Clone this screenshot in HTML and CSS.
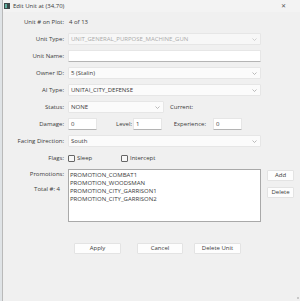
FILE: index.html
```html
<!DOCTYPE html>
<html lang="en">
<head>
  <meta charset="UTF-8">
  <meta name="viewport" content="width=device-width, initial-scale=1.0">
  <title>Edit Unit</title>
  <link rel="stylesheet" href="styles.css">
</head>
<body>
  <div class="window">
    <div class="titlebar">
      <svg class="app-icon" width="6" height="6" viewBox="0 0 6 6">
        <rect x="0" y="0" width="6" height="6" fill="#3d4a4a"/>
        <rect x="1" y="1" width="2" height="4" fill="#5fb0a0"/>
      </svg>
      <span class="title">Edit Unit at (34,70)</span>
      <span class="close">&#x2715;</span>
    </div>

    <div class="form">
      <div class="lbl">Unit # on Plot:</div>
      <div class="value">4 of 13</div>
      <div></div>

      <div class="lbl">Unit Type:</div>
      <div class="combo disabled"><span>UNIT_GENERAL_PURPOSE_MACHINE_GUN</span><svg class="chev" width="5" height="3" viewBox="0 0 5 3"><polyline points="0.5,0.5 2.5,2.5 4.5,0.5" fill="none" stroke="#c4c4c4" stroke-width="0.8"/></svg></div>
      <div></div>

      <div class="lbl">Unit Name:</div>
      <div class="textbox"></div>
      <div></div>

      <div class="lbl">Owner ID:</div>
      <div class="combo"><span>5 (Stalin)</span><svg class="chev" width="5" height="3" viewBox="0 0 5 3"><polyline points="0.5,0.5 2.5,2.5 4.5,0.5" fill="none" stroke="#aaa" stroke-width="0.8"/></svg></div>
      <div></div>

      <div class="lbl">AI Type:</div>
      <div class="combo"><span>UNITAI_CITY_DEFENSE</span><svg class="chev" width="5" height="3" viewBox="0 0 5 3"><polyline points="0.5,0.5 2.5,2.5 4.5,0.5" fill="none" stroke="#aaa" stroke-width="0.8"/></svg></div>
      <div></div>

      <div class="lbl">Status:</div>
      <div class="inline">
        <div class="combo status"><span>NONE</span><svg class="chev" width="5" height="3" viewBox="0 0 5 3"><polyline points="0.5,0.5 2.5,2.5 4.5,0.5" fill="none" stroke="#aaa" stroke-width="0.8"/></svg></div>
        <span class="current">Current:</span>
      </div>
      <div></div>

      <div class="lbl">Damage:</div>
      <div class="inline">
        <div class="textbox small">0</div>
        <span class="lbl lvl">Level:</span>
        <div class="textbox small">1</div>
        <span class="lbl exp">Experience:</span>
        <div class="textbox small">0</div>
      </div>
      <div></div>

      <div class="lbl">Facing Direction:</div>
      <div class="combo"><span>South</span><svg class="chev" width="5" height="3" viewBox="0 0 5 3"><polyline points="0.5,0.5 2.5,2.5 4.5,0.5" fill="none" stroke="#aaa" stroke-width="0.8"/></svg></div>
      <div></div>

      <div class="lbl">Flags:</div>
      <div class="inline">
        <span class="check"></span><span class="check-text sleep">Sleep</span>
        <span class="check"></span><span class="check-text">Intercept</span>
      </div>
      <div></div>

      <div class="lbl-stack">
        <span>Promotions:</span>
        <span class="total">Total #: 4</span>
      </div>
      <div class="listbox">
        <div>PROMOTION_COMBAT1</div>
        <div>PROMOTION_WOODSMAN</div>
        <div>PROMOTION_CITY_GARRISON1</div>
        <div>PROMOTION_CITY_GARRISON2</div>
      </div>
      <div class="side-buttons">
        <button class="btn side">Add</button>
        <button class="btn side">Delete</button>
      </div>
    </div>

    <div class="actions">
      <button class="btn apply">Apply</button>
      <button class="btn cancel">Cancel</button>
      <button class="btn delete-unit">Delete Unit</button>
    </div>
    <div class="grip"></div>
  </div>
</body>
</html>
```

FILE: styles.css
```css
html, body {
  margin: 0;
  height: 100%;
}
body {
  background: #dfe3e6;
  font-family: "Open Sans", "Noto Sans", sans-serif;
  font-size: 6px;
  color: #3a3a3a;
  overflow: hidden;
}
.window {
  margin-left: 2px;
  height: 301px;
  background: #f0f0f0;
  border-left: 1px solid #b9b9b9;
  position: relative;
}
.titlebar {
  height: 12px;
  display: flex;
  align-items: center;
  background: #f3f3f3;
}
.app-icon {
  margin-left: 1px;
  margin-right: 3px;
}
.close {
  margin-left: auto;
  margin-right: 14px;
  color: #555;
}
.form {
  display: grid;
  grid-template-columns: 61px 193px 31px;
  grid-template-rows: repeat(9, 12px) 53px;
  column-gap: 4px;
  row-gap: 5px;
  padding-top: 4px;
}
.lbl {
  text-align: right;
  line-height: 12px;
  white-space: nowrap;
}
.value {
  line-height: 12px;
  padding-left: 1px;
}
.combo, .textbox {
  box-sizing: border-box;
  height: 12px;
  background: #fbfbfb;
  border: 1px solid #e6e6e6;
  border-radius: 1px;
  display: flex;
  align-items: center;
  padding-left: 2px;
  padding-right: 3px;
  white-space: nowrap;
  overflow: hidden;
}
.combo span {
  flex: 1;
  overflow: hidden;
}
.combo.disabled {
  background: #f7f7f7;
  color: #ababab;
}
.textbox {
  background: #fff;
  border-bottom-color: #b4b4b4;
}
.chev {
  flex: none;
}
.inline {
  display: flex;
  align-items: center;
}
.combo.status {
  width: 96px;
}
.current {
  margin-left: 6px;
}
.textbox.small {
  width: 29px;
}
.lvl {
  width: 35px;
  padding-right: 1px;
}
.exp {
  box-sizing: border-box;
  width: 51px;
  padding-right: 7px;
}
.check {
  box-sizing: border-box;
  width: 7px;
  height: 7px;
  border: 1px solid #666;
  border-radius: 1px;
  background: #f7f7f7;
}
.check-text {
  margin-left: 2px;
}
.sleep {
  width: 44px;
}
.lbl-stack {
  display: flex;
  flex-direction: column;
  align-items: flex-end;
  padding-top: 1px;
}
.lbl-stack span {
  line-height: 8px;
}
.total {
  margin-top: 7px;
  padding-right: 4px;
}
.listbox {
  box-sizing: border-box;
  height: 53px;
  background: #fff;
  border: 1px solid #a9a9a9;
  padding: 1px;
  line-height: 8px;
}
.side-buttons {
  display: flex;
  flex-direction: column;
  gap: 6px;
  padding-left: 2px;
  padding-top: 1px;
}
.btn {
  box-sizing: border-box;
  font-family: inherit;
  font-size: 6px;
  color: #3a3a3a;
  background: #fdfdfd;
  border: 1px solid #e3e3e3;
  border-radius: 1px;
  height: 11px;
  padding: 0;
  line-height: 9px;
}
.btn.side {
  width: 27px;
}
.actions {
  display: flex;
  padding-left: 71px;
  margin-top: 21px;
}
.apply { width: 47px; }
.cancel { width: 46px; margin-left: 16px; }
.delete-unit { width: 47px; margin-left: 11px; }
.grip {
  position: absolute;
  right: 1px;
  bottom: 2px;
  width: 2px;
  height: 2px;
  background: #c8c8c8;
}
```
